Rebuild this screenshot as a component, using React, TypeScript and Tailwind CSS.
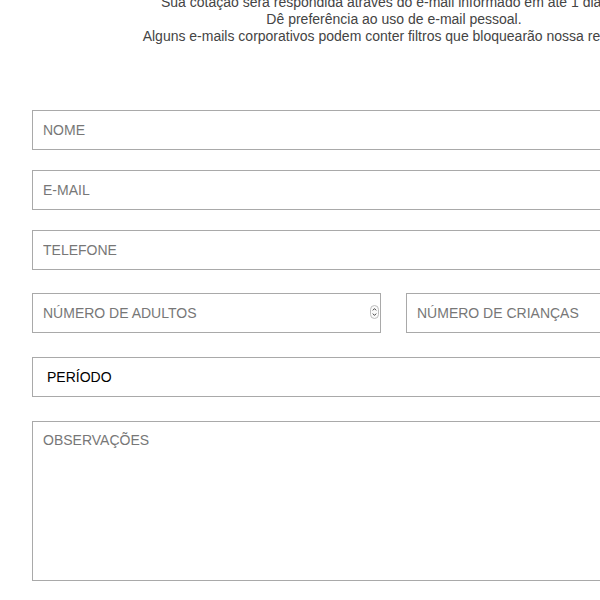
export default function App() {
  const field =
    "block h-[40px] w-full border border-[#a9a9a9] bg-white px-[10px] text-[14px] text-[#333] placeholder:text-[#777] outline-none";

  return (
    <div className="h-[600px] w-[600px] overflow-hidden bg-white font-['Liberation_Sans',Arial,sans-serif]">
      <div className="ml-[32px] w-[724px]">
        <div className="mt-[-6px] text-center text-[14px] leading-[17px] text-[#444]">
          <p>Sua cotação será respondida através do e-mail informado em até 1 dia útil.</p>
          <p>Dê preferência ao uso de e-mail pessoal.</p>
          <p>Alguns e-mails corporativos podem conter filtros que bloquearão nossa resposta.</p>
        </div>

        <form className="mt-[65px]">
          <input type="text" placeholder="NOME" className={field} />
          <input type="email" placeholder="E-MAIL" className={`${field} mt-[20px]`} />
          <input type="tel" placeholder="TELEFONE" className={`${field} mt-[20px]`} />

          <div className="mt-[23px] grid grid-cols-[349px_1fr] gap-[25px]">
            <div className="relative">
              <input type="text" placeholder="NÚMERO DE ADULTOS" className={field} />
              <svg
                className="absolute right-[2px] top-[12px]"
                width="9"
                height="14"
                viewBox="0 0 9 14"
                fill="none"
              >
                <rect x="0.5" y="0.5" width="8" height="13" rx="4" stroke="#bdbdbd" fill="#fafafa" />
                <path d="M2.8 5.4 L4.5 3.6 L6.2 5.4" stroke="#444" strokeWidth="1" />
                <path d="M2.8 8.6 L4.5 10.4 L6.2 8.6" stroke="#444" strokeWidth="1" />
              </svg>
            </div>
            <input type="text" placeholder="NÚMERO DE CRIANÇAS" className={field} />
          </div>

          <div className="mt-[24px] flex h-[40px] items-center border border-[#a9a9a9] pl-[14px] text-[14px] text-black">
            PERÍODO
          </div>

          <textarea
            placeholder="OBSERVAÇÕES"
            className="mt-[24px] block h-[160px] w-full resize-none border border-[#a9a9a9] px-[10px] pt-[10px] text-[14px] leading-[17px] text-[#333] placeholder:text-[#777] outline-none"
          />
        </form>
      </div>
    </div>
  );
}
